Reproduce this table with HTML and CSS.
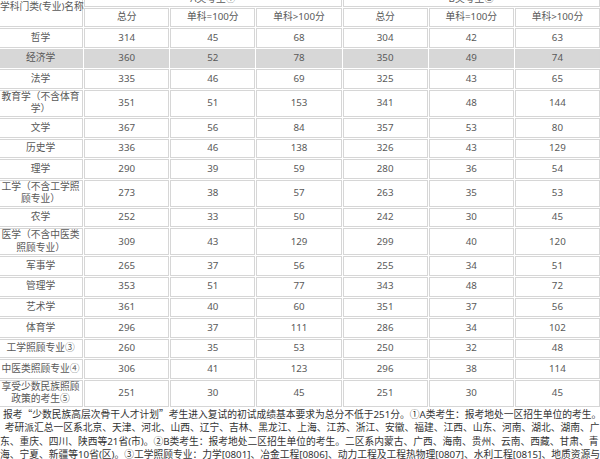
FILE: index.html
```html
<!DOCTYPE html>
<html lang="zh-CN">
<head>
<meta charset="utf-8">
<title>分数线</title>
<link rel="stylesheet" href="styles.css">
</head>
<body>
<div class="sheet">
  <table class="score">
    <thead>
      <tr class="group">
        <th rowspan="2" class="name">学科门类(专业)名称</th>
        <th colspan="3">A类考生①</th>
        <th colspan="3">B类考生②</th>
      </tr>
      <tr>
        <th>总分</th><th>单科=100分</th><th>单科&gt;100分</th>
        <th>总分</th><th>单科=100分</th><th>单科&gt;100分</th>
      </tr>
    </thead>
    <tbody>
      <tr><td>哲学</td><td>314</td><td>45</td><td>68</td><td>304</td><td>42</td><td>63</td></tr>
      <tr class="alt"><td>经济学</td><td>360</td><td>52</td><td>78</td><td>350</td><td>49</td><td>74</td></tr>
      <tr><td>法学</td><td>335</td><td>46</td><td>69</td><td>325</td><td>43</td><td>65</td></tr>
      <tr><td>教育学（不含体育学）</td><td>351</td><td>51</td><td>153</td><td>341</td><td>48</td><td>144</td></tr>
      <tr><td>文学</td><td>367</td><td>56</td><td>84</td><td>357</td><td>53</td><td>80</td></tr>
      <tr><td>历史学</td><td>336</td><td>46</td><td>138</td><td>326</td><td>43</td><td>129</td></tr>
      <tr><td>理学</td><td>290</td><td>39</td><td>59</td><td>280</td><td>36</td><td>54</td></tr>
      <tr><td>工学（不含工学照顾专业）</td><td>273</td><td>38</td><td>57</td><td>263</td><td>35</td><td>53</td></tr>
      <tr><td>农学</td><td>252</td><td>33</td><td>50</td><td>242</td><td>30</td><td>45</td></tr>
      <tr><td>医学（不含中医类照顾专业）</td><td>309</td><td>43</td><td>129</td><td>299</td><td>40</td><td>120</td></tr>
      <tr><td>军事学</td><td>265</td><td>37</td><td>56</td><td>255</td><td>34</td><td>51</td></tr>
      <tr><td>管理学</td><td>353</td><td>51</td><td>77</td><td>343</td><td>48</td><td>72</td></tr>
      <tr><td>艺术学</td><td>361</td><td>40</td><td>60</td><td>351</td><td>37</td><td>56</td></tr>
      <tr><td>体育学</td><td>296</td><td>37</td><td>111</td><td>286</td><td>34</td><td>102</td></tr>
      <tr><td>工学照顾专业③</td><td>260</td><td>35</td><td>53</td><td>250</td><td>32</td><td>48</td></tr>
      <tr><td>中医类照顾专业④</td><td>306</td><td>41</td><td>123</td><td>296</td><td>38</td><td>114</td></tr>
      <tr><td>享受少数民族照顾政策的考生⑤</td><td>251</td><td>30</td><td>45</td><td>251</td><td>30</td><td>45</td></tr>
    </tbody>
  </table>
  <p class="note">报考<span class="cjk">“</span>少数民族高层次骨干人才计划<span class="cjk">”</span>考生进入复试的初试成绩基本要求为总分不低于251分。①A类考生：报考地处一区招生单位的考生。<br>&ensp;考研派汇总一区系北京、天津、河北、山西、辽宁、吉林、黑龙江、上海、江苏、浙江、安徽、福建、江西、山东、河南、湖北、湖南、广<br>东、重庆、四川、陕西等21省(市)。②B类考生：报考地处二区招生单位的考生。二区系内蒙古、广西、海南、贵州、云南、西藏、甘肃、青<br>海、宁夏、新疆等10省(区)。③工学照顾专业：力学[0801]、冶金工程[0806]、动力工程及工程热物理[0807]、水利工程[0815]、地质资源与</p>
</div>
</body>
</html>
```

FILE: styles.css
```css
* {
  box-sizing: border-box;
}

html,
body {
  margin: 0;
  padding: 0;
  background: #ffffff;
}

body {
  font-family: "Noto Sans", "Noto Sans CJK SC", sans-serif;
  font-size: 9.75px;
  color: #595959;
}

.sheet {
  width: 600px;
  height: 459px;
  overflow: hidden;
}

.score {
  table-layout: fixed;
  width: 604px;
  border-collapse: separate;
  border-spacing: 1px;
  margin: -14px 0 0 -3px;
}

.score th,
.score td {
  border: 1px solid #d6d6d6;
  padding: 0 1px;
  height: 19.6px;
  line-height: 12.5px;
  text-align: center;
  vertical-align: middle;
  font-weight: normal;
}

.score .group th {
  vertical-align: bottom;
  padding-bottom: 0;
}

.score .group th.name {
  vertical-align: middle;
  white-space: nowrap;
}

.score tbody tr:first-child td {
  padding-top: 1px;
}

.score .alt td {
  background: #d7d7d7;
}

.note {
  margin: 0;
  line-height: 13.3px;
  color: #333333;
  white-space: nowrap;
  text-indent: 3px;
}

.cjk {
  font-family: "Noto Sans CJK SC", sans-serif;
}
```
